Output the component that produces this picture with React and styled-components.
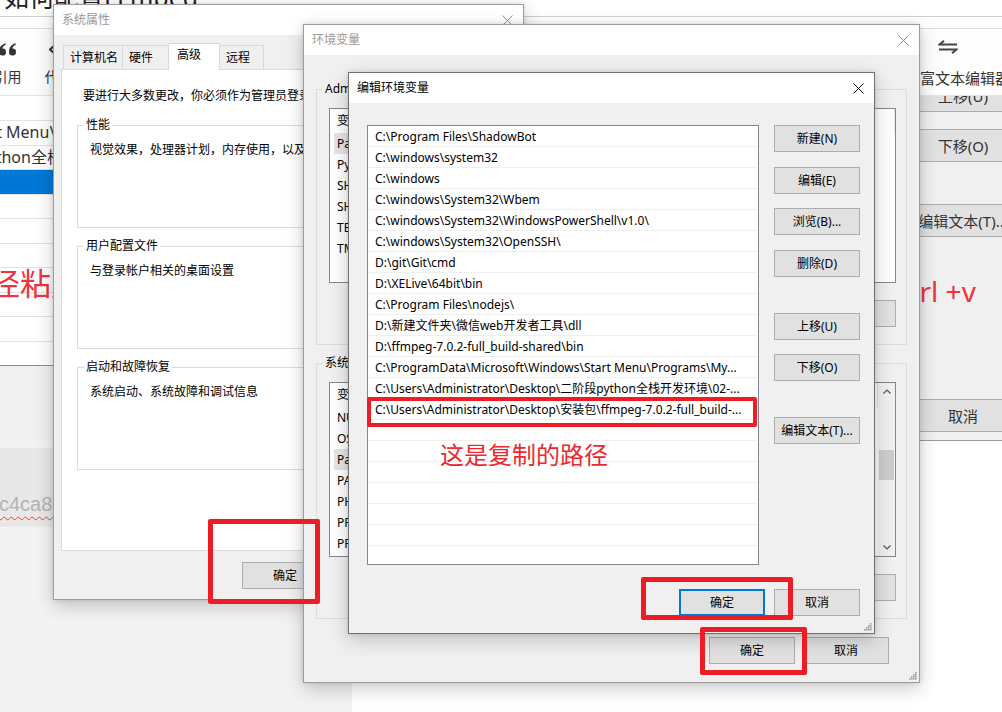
import styled, { createGlobalStyle } from "styled-components"

const UI_FONT = `"Noto Sans", "Noto Sans CJK SC", sans-serif`
const RED = "#ee1d25"

const GlobalStyle = createGlobalStyle`
  html, body { margin: 0; padding: 0; background: #fff; }
  * { box-sizing: border-box; }
`

const editPaths = [
  "C:\\Program Files\\ShadowBot",
  "C:\\windows\\system32",
  "C:\\windows",
  "C:\\windows\\System32\\Wbem",
  "C:\\windows\\System32\\WindowsPowerShell\\v1.0\\",
  "C:\\windows\\System32\\OpenSSH\\",
  "D:\\git\\Git\\cmd",
  "D:\\XELive\\64bit\\bin",
  "C:\\Program Files\\nodejs\\",
  "D:\\新建文件夹\\微信web开发者工具\\dll",
  "D:\\ffmpeg-7.0.2-full_build-shared\\bin",
  "C:\\ProgramData\\Microsoft\\Windows\\Start Menu\\Programs\\My...",
  "C:\\Users\\Administrator\\Desktop\\二阶段python全栈开发环境\\02-...",
  "C:\\Users\\Administrator\\Desktop\\安装包\\ffmpeg-7.0.2-full_build-...",
  "", "", "", "", "", "", "",
]

const userVars = ["Path", "PyCharm Community Edition", "SHADOWBOT_HOME", "SHADOWBOT_DATA", "TEMP", "TMP"]
const sysVars = ["NUMBER_OF_PROCESSORS", "OS", "Path", "PATHEXT", "PHP_HOME", "PROCESSOR_ARCHITECTURE", "PROCESSOR_IDENTIFIER"]

export default function App() {
  return (
    <>
      <GlobalStyle />
      <Desktop>
        <BlogPage />
        <SystemProps />
        <EnvVars />
        <EditEnv />
        <RedBox $x={367} $y={397} $w={390} $h={30} $t={4} />
        <RedNote $x={440} $y={440}>这是复制的路径</RedNote>
        <RedBox $x={641} $y={577} $w={152} $h={43} $t={5} />
        <RedBox $x={700} $y={627} $w={107} $h={48} $t={5} />
        <RedBox $x={208} $y={519} $w={112} $h={85} $t={5} />
      </Desktop>
    </>
  )
}

/* ---------- background blog editor ---------- */

function BlogPage() {
  return (
    <Page>
      <Header><PageTitle>如何配置FFmpeg</PageTitle></Header>
      <SubBar />
      <Toolbar>
        <ToolGroup>
          <ToolItem>
            <svg width="20" height="13" viewBox="0 0 20 13">
              <path d="M1 9 C1 4.5 3.5 1.5 7.5 0.3 L8 1.6 C5.8 2.6 4.6 4 4.4 5.6 A3.5 3.5 0 1 1 1 9 Z" fill="#333" />
              <path d="M11 9 C11 4.5 13.5 1.5 17.5 0.3 L18 1.6 C15.8 2.6 14.6 4 14.4 5.6 A3.5 3.5 0 1 1 11 9 Z" fill="#333" />
            </svg>
            <ToolLabel>引用</ToolLabel>
          </ToolItem>
          <ToolItem>
            <svg width="20" height="13" viewBox="0 0 20 13">
              <path d="M6 2 L1 6.5 L6 11 M14 2 L19 6.5 L14 11" stroke="#333" strokeWidth="2" fill="none" />
            </svg>
            <ToolLabel>代码</ToolLabel>
          </ToolItem>
        </ToolGroup>
        <RichItem>
          <svg width="20" height="14" viewBox="0 0 20 14">
            <path d="M19 4.5 H1.5 L6 0.8" stroke="#444" strokeWidth="2" fill="none" />
            <path d="M1 9.5 H18.5 L14 13.2" stroke="#444" strokeWidth="2" fill="none" />
          </svg>
          <RichLabel>富文本编辑器</RichLabel>
        </RichItem>
      </Toolbar>
      <Shot>
        <ShotLeft>
          <ShotTop />
          <ShotRow><ShotText $shift={-34}>Start Menu\Programs</ShotText></ShotRow>
          <ShotRow><ShotText $shift={-70}>二阶段python全栈开发环境</ShotText></ShotRow>
          <ShotRow $selected />
          <ShotRow />
          <ShotRow />
          <ShotRow />
          <ShotRow />
          <ShotRow />
          <ShotRow />
          <ShotRow />
          <ShotFoot />
          <ShotNote>路径粘贴</ShotNote>
        </ShotLeft>
        <ShotRight>
          <ShotButton $mt={-17}>上移(U)</ShotButton>
          <ShotButton $mt={17}>下移(O)</ShotButton>
          <ShotButton $mt={42}>编辑文本(T)...</ShotButton>
          <ShotHint>ctrl +v</ShotHint>
          <ShotButton $mt={92}>取消</ShotButton>
        </ShotRight>
      </Shot>
      <Lower>
        <LeftPane>
          <CodeBlock><CodeText>c4ca8b</CodeText></CodeBlock>
        </LeftPane>
        <MainPane />
      </Lower>
    </Page>
  )
}

/* ---------- windows ---------- */

function CloseIcon({ color }) {
  return (
    <svg width="11" height="11" viewBox="0 0 11 11">
      <path d="M0.5 0.5 L10.5 10.5 M10.5 0.5 L0.5 10.5" stroke={color} strokeWidth="1" />
    </svg>
  )
}

function Grip() {
  return (
    <GripMark width="8" height="8" viewBox="0 0 8 8">
      {[[6, 0], [4, 2], [6, 2], [2, 4], [4, 4], [6, 4], [0, 6], [2, 6], [4, 6], [6, 6]].map(([x, y]) => (
        <rect key={`${x}-${y}`} x={x} y={y} width="1.6" height="1.6" fill="#a0a0a0" />
      ))}
    </GripMark>
  )
}

function SystemProps() {
  return (
    <Win $x={53} $y={4} $w={471} $h={596}>
      <TitleBar>
        <Title $dim>系统属性</Title>
        <CloseIcon color="#8c8c8c" />
      </TitleBar>
      <SysBody>
        <Tabs>
          <Tab $w={60}>计算机名</Tab>
          <Tab $w={47}>硬件</Tab>
          <Tab $w={52} $active>高级</Tab>
          <Tab $w={45}>远程</Tab>
        </Tabs>
        <Panel>
          <Intro>要进行大多数更改，你必须作为管理员登录。</Intro>
          <Group $bg="#fff" $mt={21}>
            <GroupLabel>性能</GroupLabel>
            <GroupText>视觉效果，处理器计划，内存使用，以及虚拟内存</GroupText>
          </Group>
          <Group $bg="#fff" $mt={18}>
            <GroupLabel>用户配置文件</GroupLabel>
            <GroupText>与登录帐户相关的桌面设置</GroupText>
          </Group>
          <Group $bg="#fff" $mt={18}>
            <GroupLabel>启动和故障恢复</GroupLabel>
            <GroupText>系统启动、系统故障和调试信息</GroupText>
          </Group>
        </Panel>
        <ButtonRow $mt={11}>
          <Btn>确定</Btn>
          <Btn>取消</Btn>
          <Btn>应用(A)</Btn>
        </ButtonRow>
      </SysBody>
    </Win>
  )
}

function VarList({ items, selected, scroll }) {
  return (
    <ListBox>
      <ListCols>
        <ListHeader>
          <HeadCell $w={150}>变量</HeadCell>
          <HeadCell>值</HeadCell>
        </ListHeader>
        {items.map((name, i) => (
          <VarRow key={name}>
            <VarCell $w={150} $selected={i === selected}>{name}</VarCell>
            <VarCell>%USERPROFILE%</VarCell>
          </VarRow>
        ))}
      </ListCols>
      {scroll && (
        <ScrollBar>
          <ScrollArrow>
            <svg width="8" height="5" viewBox="0 0 8 5"><path d="M0.5 4.5 L4 1 L7.5 4.5" stroke="#555" strokeWidth="1.2" fill="none" /></svg>
          </ScrollArrow>
          <ScrollTrack><ScrollThumb /></ScrollTrack>
          <ScrollArrow>
            <svg width="8" height="5" viewBox="0 0 8 5"><path d="M0.5 0.5 L4 4 L7.5 0.5" stroke="#555" strokeWidth="1.2" fill="none" /></svg>
          </ScrollArrow>
        </ScrollBar>
      )}
    </ListBox>
  )
}

function EnvVars() {
  return (
    <Win $x={303} $y={24} $w={617} $h={659}>
      <TitleBar>
        <Title $dim>环境变量</Title>
        <CloseIcon color="#8c8c8c" />
      </TitleBar>
      <EnvBody>
        <Group $bg="#f0f0f0" $mt={0} $h={256} $pad="18px 10px 0 12px">
          <GroupLabel>Administrator 的用户变量(U)</GroupLabel>
          <VarList items={userVars} selected={0} />
          <ButtonRow $mt={17} $mr={0}>
            <Btn>新建(N)...</Btn>
            <Btn>编辑(E)...</Btn>
            <Btn>删除(D)</Btn>
          </ButtonRow>
        </Group>
        <Group $bg="#f0f0f0" $mt={18} $h={256} $pad="18px 10px 0 12px">
          <GroupLabel>系统变量(S)</GroupLabel>
          <VarList items={sysVars} selected={2} scroll />
          <ButtonRow $mt={17} $mr={0}>
            <Btn>新建(W)...</Btn>
            <Btn>编辑(I)...</Btn>
            <Btn>删除(L)</Btn>
          </ButtonRow>
        </Group>
        <ButtonRow $mt={18} $mr={18}>
          <Btn>确定</Btn>
          <Btn>取消</Btn>
        </ButtonRow>
      </EnvBody>
      <Grip />
    </Win>
  )
}

function EditEnv() {
  return (
    <Win $x={348} $y={72} $w={527} $h={562} $active>
      <TitleBar>
        <Title>编辑环境变量</Title>
        <CloseIcon color="#111" />
      </TitleBar>
      <EditBody>
        <EditMain>
          <PathList>
            {editPaths.map((p, i) => (
              <PathRow key={i}>{p}</PathRow>
            ))}
          </PathList>
          <SideButtons>
            <Btn $mt={0}>新建(N)</Btn>
            <Btn $mt={15}>编辑(E)</Btn>
            <Btn $mt={14}>浏览(B)...</Btn>
            <Btn $mt={15}>删除(D)</Btn>
            <Btn $mt={36}>上移(U)</Btn>
            <Btn $mt={14}>下移(O)</Btn>
            <Btn $mt={36}>编辑文本(T)...</Btn>
          </SideButtons>
        </EditMain>
        <ButtonRow $mt={24} $gap={9}>
          <Btn $primary>确定</Btn>
          <Btn>取消</Btn>
        </ButtonRow>
      </EditBody>
      <Grip />
    </Win>
  )
}

/* ---------- styles ---------- */

const Desktop = styled.div`
  position: relative;
  width: 1002px;
  height: 712px;
  overflow: hidden;
  background: #fff;
`

const Page = styled.div`
  display: flex;
  flex-direction: column;
  height: 100%;
  font-family: ${UI_FONT};
  color: #333;
`
const Header = styled.div`
  height: 17px;
  flex: none;
  overflow: hidden;
  border-bottom: 1px solid #cfcfcf;
`
const PageTitle = styled.h1`
  margin: -18px 0 0 4px;
  font-size: 25px;
  line-height: 30px;
  font-weight: 400;
  color: #222;
  white-space: nowrap;
`
const SubBar = styled.div`
  height: 12px;
  flex: none;
  border-bottom: 1px solid #dedede;
`
const Toolbar = styled.div`
  height: 67px;
  flex: none;
  display: flex;
  justify-content: space-between;
  border-bottom: 1px solid #e4e4e4;
  background: #fdfdfd;
`
const ToolGroup = styled.div`
  display: flex;
  margin-left: -18px;
`
const ToolItem = styled.div`
  width: 51px;
  display: flex;
  flex-direction: column;
  align-items: center;
  padding-top: 14px;
  gap: 12px;
`
const ToolLabel = styled.span`
  font-size: 14px;
  line-height: 18px;
  color: #333;
  white-space: nowrap;
`
const RichItem = styled.div`
  width: 90px;
  margin-right: -8px;
  display: flex;
  flex-direction: column;
  align-items: flex-start;
  padding-top: 11px;
  gap: 15px;
  & > svg { margin-left: 18px; }
`
const RichLabel = styled.span`
  font-size: 15px;
  line-height: 18px;
  color: #333;
  white-space: nowrap;
`

const Shot = styled.div`
  height: 345px;
  flex: none;
  display: flex;
  justify-content: space-between;
`
const ShotLeft = styled.div`
  position: relative;
  width: 60px;
  display: flex;
  flex-direction: column;
  overflow: hidden;
  background: #fff;
`
const ShotTop = styled.div`
  height: 24px;
  flex: none;
`
const ShotRow = styled.div`
  height: 24.5px;
  flex: none;
  border-top: 1px solid #e2e2e2;
  background: ${p => (p.$selected ? "#0078d7" : "#fff")};
  overflow: hidden;
  white-space: nowrap;
`
const ShotText = styled.span`
  display: block;
  margin-left: ${p => p.$shift}px;
  font-size: 16px;
  line-height: 23px;
  color: #333;
`
const ShotFoot = styled.div`
  flex: 1;
  background: #f0f0f0;
  border-top: 1px solid #8e8e8e;
`
const ShotNote = styled.span`
  position: absolute;
  left: -42px;
  top: 170px;
  font-size: 31px;
  line-height: 34px;
  color: #ef3340;
  white-space: nowrap;
`
const ShotRight = styled.div`
  width: 90px;
  display: flex;
  flex-direction: column;
  background: #f0f0f0;
  overflow: hidden;
  border-bottom: 1px solid #9a9a9a;
`
const ShotButton = styled.div`
  flex: none;
  width: 100px;
  height: 33px;
  margin: ${p => p.$mt}px 0 0 1px;
  display: flex;
  align-items: center;
  justify-content: center;
  background: #e1e1e1;
  border: 1px solid #adadad;
  font-size: 15px;
  color: #333;
  white-space: nowrap;
`
const ShotHint = styled.div`
  margin: 38px 0 0 -16px;
  font-size: 28px;
  line-height: 32px;
  color: #ef3340;
  white-space: nowrap;
`

const Lower = styled.div`
  flex: 1;
  display: flex;
`
const LeftPane = styled.div`
  width: 352px;
  background: #f3f3f3;
  padding-top: 7px;
`
const CodeBlock = styled.div`
  height: 79px;
  background: #e8e8e8;
  display: flex;
  align-items: flex-end;
  padding-bottom: 11px;
  overflow: hidden;
`
const CodeText = styled.span`
  margin-left: -1px;
  font-family: "Liberation Sans", sans-serif;
  font-size: 20px;
  line-height: 24px;
  color: #b4b4b4;
  text-decoration: underline wavy #f23a3a;
  text-decoration-thickness: 1px;
  text-underline-offset: 5px;
`
const MainPane = styled.div`
  flex: 1;
  background: #fff;
`

const Win = styled.section`
  position: absolute;
  left: ${p => p.$x}px;
  top: ${p => p.$y}px;
  width: ${p => p.$w}px;
  height: ${p => p.$h}px;
  display: flex;
  flex-direction: column;
  background: #f0f0f0;
  border: 1px solid ${p => (p.$active ? "#707070" : "#9d9d9d")};
  box-shadow: 0 6px 18px rgba(0, 0, 0, 0.2), 0 0 5px rgba(0, 0, 0, 0.12);
  font-family: ${UI_FONT};
  font-size: 12px;
  color: #000;
`
const TitleBar = styled.header`
  height: 30px;
  flex: none;
  display: flex;
  align-items: center;
  justify-content: space-between;
  padding: 0 10px 0 8px;
  background: #fff;
`
const Title = styled.span`
  font-size: 12px;
  line-height: 16px;
  color: ${p => (p.$dim ? "#999" : "#000")};
`
const GripMark = styled.svg`
  position: absolute;
  right: 2px;
  bottom: 2px;
`

const SysBody = styled.div`
  flex: 1;
  display: flex;
  flex-direction: column;
  padding: 8px 7px 10px 7px;
`
const Tabs = styled.div`
  display: flex;
  align-items: flex-end;
  height: 27px;
  margin: 0 0 -1px 2px;
  position: relative;
  z-index: 1;
`
const Tab = styled.div`
  width: ${p => p.$w}px;
  height: ${p => (p.$active ? 27 : 24)}px;
  margin: 0 -1px ${p => (p.$active ? 0 : 1)}px 0;
  padding: ${p => (p.$active ? "3px 0 0 8px" : "0 0 0 6px")};
  display: flex;
  align-items: ${p => (p.$active ? "flex-start" : "center")};
  border: 1px solid #d9d9d9;
  border-bottom: none;
  background: ${p => (p.$active ? "#fff" : "#f0f0f0")};
  position: relative;
  z-index: ${p => (p.$active ? 1 : 0)};
  white-space: nowrap;
  line-height: 16px;
`
const Panel = styled.div`
  flex: 1;
  background: #fff;
  border: 1px solid #d9d9d9;
  padding: 18px 14px 0 15px;
`
const Intro = styled.p`
  margin: 0 0 0 6px;
  line-height: 16px;
  white-space: nowrap;
`
const Group = styled.div`
  position: relative;
  height: ${p => p.$h || 103}px;
  margin-top: ${p => p.$mt}px;
  padding: ${p => p.$pad || "16px 12px 0 12px"};
  border: 1px solid #dcdcdc;
  background: ${p => p.$bg};
  flex: none;
`
const GroupLabel = styled.span`
  position: absolute;
  top: -9px;
  left: 6px;
  padding: 0 2px;
  line-height: 16px;
  background: inherit;
  white-space: nowrap;
`
const GroupText = styled.p`
  margin: 0;
  line-height: 16px;
  white-space: nowrap;
`
const ButtonRow = styled.div`
  display: flex;
  justify-content: flex-end;
  gap: ${p => p.$gap || 8}px;
  margin-top: ${p => p.$mt}px;
  margin-right: ${p => p.$mr || 0}px;
  flex: none;
`
const Btn = styled.div`
  width: 86px;
  height: 27px;
  flex: none;
  margin-top: ${p => p.$mt || 0}px;
  display: flex;
  align-items: center;
  justify-content: center;
  background: #e1e1e1;
  border: ${p => (p.$primary ? "2px solid #0078d7" : "1px solid #adadad")};
  font-size: 12px;
  line-height: 16px;
  color: #000;
  white-space: nowrap;
`

const EnvBody = styled.div`
  flex: 1;
  display: flex;
  flex-direction: column;
  padding: 34px 12px 0 12px;
`
const ListBox = styled.div`
  height: 175px;
  display: flex;
  background: #fff;
  border: 1px solid #828790;
  overflow: hidden;
`
const ListCols = styled.div`
  flex: 1;
  min-width: 0;
`
const ListHeader = styled.div`
  height: 24px;
  display: flex;
`
const HeadCell = styled.div`
  width: ${p => (p.$w ? `${p.$w}px` : "auto")};
  flex: ${p => (p.$w ? "none" : 1)};
  padding-left: 7px;
  line-height: 24px;
  border-right: 1px solid #e5e5e5;
`
const VarRow = styled.div`
  height: 21px;
  display: flex;
  margin: 0 2px 0 4px;
`
const VarCell = styled.div`
  width: ${p => (p.$w ? `${p.$w}px` : "auto")};
  flex: ${p => (p.$w ? "none" : 1)};
  padding-left: 3px;
  line-height: 21px;
  white-space: nowrap;
  overflow: hidden;
  background: ${p => (p.$selected ? "#e5e5e5" : "transparent")};
`
const ScrollBar = styled.div`
  width: 17px;
  display: flex;
  flex-direction: column;
  background: #f0f0f0;
`
const ScrollArrow = styled.div`
  height: 17px;
  display: flex;
  align-items: center;
  justify-content: center;
`
const ScrollTrack = styled.div`
  flex: 1;
  padding: 50px 1px 0 1px;
`
const ScrollThumb = styled.div`
  height: 30px;
  background: #cdcdcd;
`

const EditBody = styled.div`
  flex: 1;
  display: flex;
  flex-direction: column;
  padding: 22px 14px 17px 18px;
`
const EditMain = styled.div`
  display: flex;
  gap: 15px;
  height: 440px;
  flex: none;
`
const PathList = styled.div`
  width: 392px;
  height: 440px;
  background: #fff;
  border: 1px solid #828790;
  overflow: hidden;
`
const PathRow = styled.div`
  height: 21px;
  padding: 1px 0 0 7px;
  border-bottom: 1px solid #efefef;
  line-height: 19px;
  white-space: nowrap;
  overflow: hidden;
`
const SideButtons = styled.div`
  display: flex;
  flex-direction: column;
`

const RedBox = styled.div`
  position: absolute;
  left: ${p => p.$x}px;
  top: ${p => p.$y}px;
  width: ${p => p.$w}px;
  height: ${p => p.$h}px;
  border: ${p => p.$t}px solid ${RED};
  border-radius: 2px;
`
const RedNote = styled.span`
  position: absolute;
  left: ${p => p.$x}px;
  top: ${p => p.$y}px;
  font-family: "Noto Sans CJK SC", sans-serif;
  font-size: 24px;
  line-height: 28px;
  color: #ea2a30;
  white-space: nowrap;
`
